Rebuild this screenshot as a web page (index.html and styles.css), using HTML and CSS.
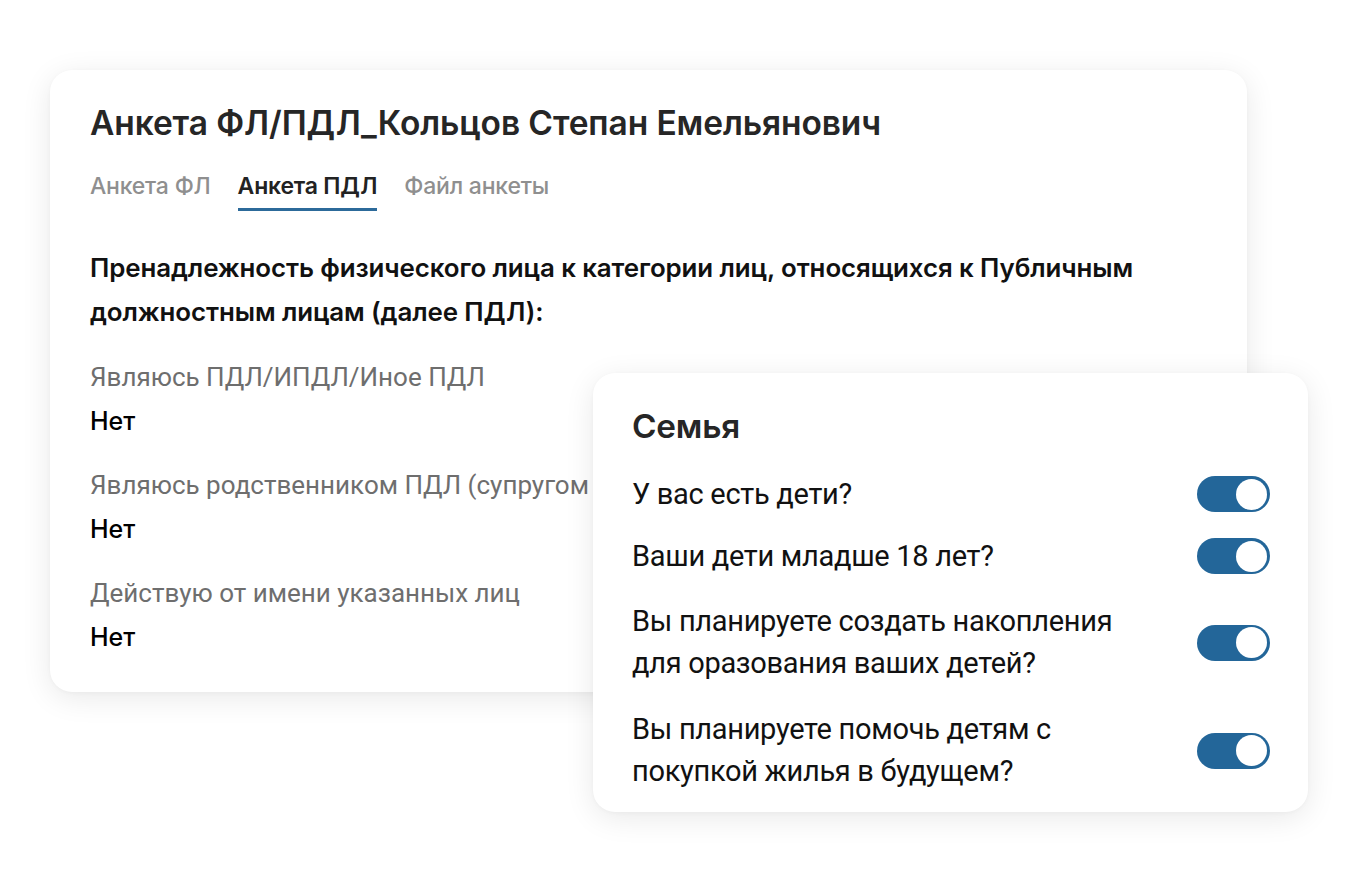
FILE: index.html
```html
<!DOCTYPE html>
<html lang="ru">
<head>
<meta charset="utf-8">
<link rel="stylesheet" href="styles.css">
</head>
<body>
<div class="stage">
  <section class="card main">
    <h1 class="title">Анкета ФЛ/ПДЛ_Кольцов Степан Емельянович</h1>
    <nav class="tabs">
      <span class="tab">Анкета ФЛ</span>
      <span class="tab active">Анкета ПДЛ</span>
      <span class="tab">Файл анкеты</span>
    </nav>
    <p class="lead">Пренадлежность физического лица к категории лиц, относящихся к Публичным должностным лицам (далее ПДЛ):</p>
    <div class="field">
      <div class="label">Являюсь ПДЛ/ИПДЛ/Иное ПДЛ</div>
      <div class="value">Нет</div>
    </div>
    <div class="field">
      <div class="label">Являюсь родственником ПДЛ (супругом</div>
      <div class="value">Нет</div>
    </div>
    <div class="field">
      <div class="label">Действую от имени указанных лиц</div>
      <div class="value">Нет</div>
    </div>
  </section>
  <section class="card family">
    <h2 class="ftitle">Семья</h2>
    <div class="row one">
      <span class="q">У вас есть дети?</span>
      <span class="toggle"><span class="knob"></span></span>
    </div>
    <div class="row one">
      <span class="q">Ваши дети младше 18 лет?</span>
      <span class="toggle"><span class="knob"></span></span>
    </div>
    <div class="row two">
      <span class="q">Вы планируете создать накопления<br>для оразования ваших детей?</span>
      <span class="toggle"><span class="knob"></span></span>
    </div>
    <div class="row two">
      <span class="q">Вы планируете помочь детям с<br>покупкой жилья в будущем?</span>
      <span class="toggle"><span class="knob"></span></span>
    </div>
  </section>
</div>
</body>
</html>
```
FILE: styles.css
```css
* { box-sizing: border-box; }
html, body { margin: 0; padding: 0; background: #ffffff; }
body { width: 1356px; height: 885px; overflow: hidden; font-family: Inter, "Noto Sans", sans-serif; }
.stage { position: relative; width: 1356px; height: 885px; padding: 70px 0 0 50px; }
.card { background: #fff; border-radius: 22px; box-shadow: 0 6px 30px rgba(0,0,0,0.09), 0 1px 4px rgba(0,0,0,0.03); }
.main { width: 1197px; height: 622px; padding: 33px 40px 0 40px; }
.title { margin: 0; font-size: 33.5px; font-weight: 600; color: #262626; line-height: 40px; letter-spacing: -0.1px; }
.tabs { display: flex; gap: 27px; margin-top: 27px; }
.tab { font-size: 23px; font-weight: 500; color: #8f8f8f; line-height: 32px; padding-bottom: 6px; border-bottom: 3px solid transparent; letter-spacing: -0.2px; }
.tab.active { color: #222; font-weight: 600; border-bottom-color: #2c6a9a; }
.lead { margin: 35px 0 0 0; font-size: 25.9px; font-weight: 600; color: #111; line-height: 44px; letter-spacing: -0.1px; }
.field { margin-top: 21px; }
.field + .field { margin-top: 20px; }
.label { font-family: Roboto, sans-serif; font-size: 26px; color: #6e6e6e; line-height: 44px; }
.value { font-size: 25px; font-weight: 500; color: #000; line-height: 44px; }
.family { position: absolute; left: 593px; top: 373px; width: 715px; height: 439px; padding: 32px 38px 0 39px; }
.ftitle { margin: 0; font-size: 33.3px; font-weight: 600; color: #262626; line-height: 42px; letter-spacing: -0.2px; }
.row { display: flex; align-items: center; justify-content: space-between; font-family: Roboto, sans-serif; font-size: 29px; letter-spacing: -0.3px; color: #111; line-height: 42px; }
.row.one { margin-top: 26px; }
.row.one + .row.one { margin-top: 20px; }
.row.two { margin-top: 24px; line-height: 41.5px; }
.row.two + .row.two { margin-top: 25px; }
.toggle { width: 73px; height: 36px; border-radius: 18px; background: #236699; position: relative; flex: none; }
.knob { position: absolute; right: 3px; top: 2.5px; width: 31px; height: 31px; border-radius: 50%; background: #fff; }
```
